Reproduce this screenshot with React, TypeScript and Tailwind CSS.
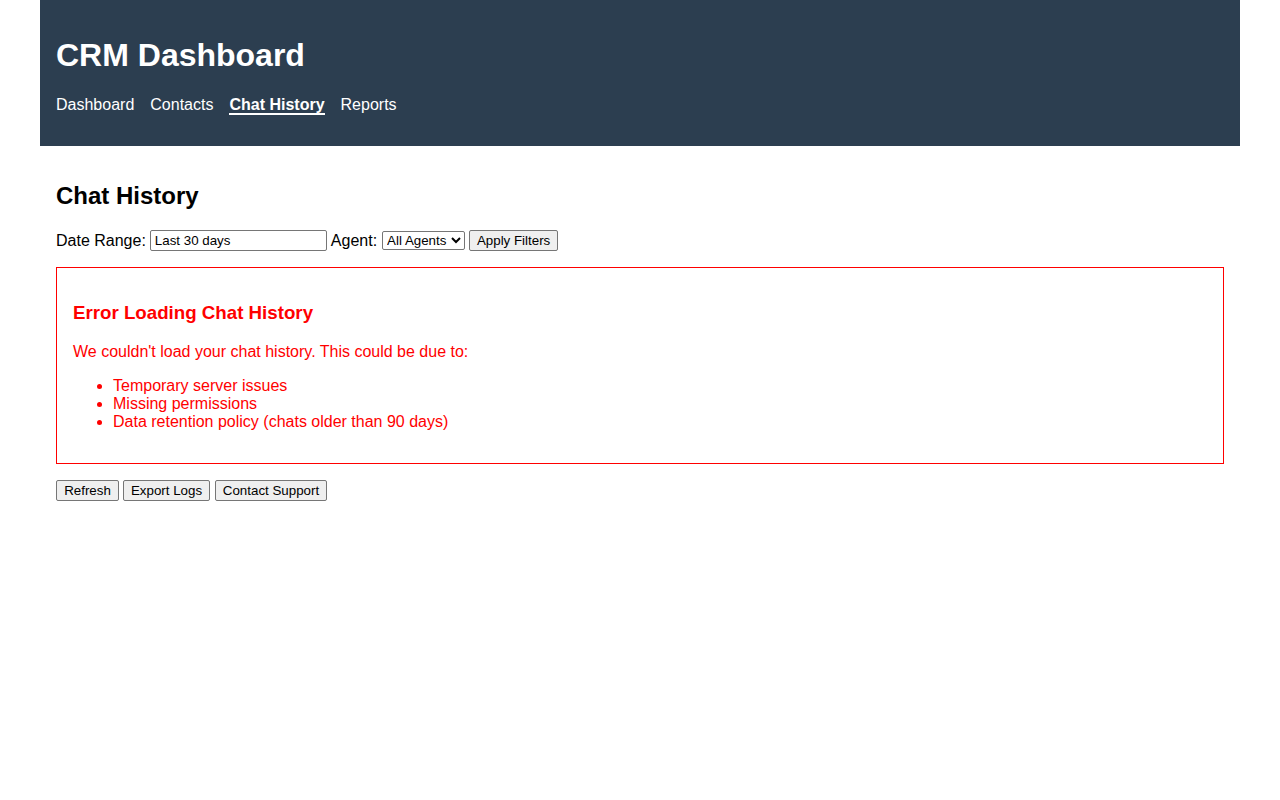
export default function App() {
  const navItems = ['Dashboard', 'Contacts', 'Chat History', 'Reports'];
  const ctrl =
    "border border-[#767676] rounded-[2px] text-[13.33px] leading-[15px] text-black font-['Liberation_Sans',Arial,sans-serif]";
  const btn = `${ctrl} bg-[#efefef] px-[6px] py-[2px] align-middle`;

  return (
    <div className="min-h-screen bg-white font-['Liberation_Sans',Arial,sans-serif] text-base text-black">
      <div className="mx-auto w-[1200px]">
        <header className="bg-[#2c3e50] px-4 pt-[37px] pb-[32px] text-white">
          <h1 className="text-[32px] leading-[37px] font-bold">CRM Dashboard</h1>
          <nav className="mt-[22px] flex h-[18px] items-start gap-4 leading-[18px]">
            {navItems.map((item) => (
              <a
                key={item}
                href="#"
                className={
                  item === 'Chat History'
                    ? 'border-b-2 border-white leading-[17px] font-bold'
                    : 'leading-[18px]'
                }
              >
                {item}
              </a>
            ))}
          </nav>
        </header>

        <main className="px-4 pt-[36px]">
          <h2 className="text-2xl leading-[28px] font-bold">Chat History</h2>
          <div className="mt-[20px] flex h-[21px] items-center leading-[18px]">
            <span>Date Range:</span>
            <input
              defaultValue="Last 30 days"
              className={`${ctrl} ml-[4px] h-[21px] w-[177px] px-[4px]`}
            />
            <span className="ml-[4px]">Agent:</span>
            <select className={`${ctrl} ml-[5px] h-[19px] w-[83px] bg-white`}>
              <option>All Agents</option>
            </select>
            <button className={`${btn} ml-[4px] h-[21px] w-[89px] px-0`}>Apply Filters</button>
          </div>

          <div className="mt-4 border border-[#ff0000] px-4 pt-[34px] pb-[32px] text-[#ff0000]">
            <h3 className="text-[18.72px] leading-[21px] font-bold">Error Loading Chat History</h3>
            <p className="mt-[20px] leading-[18px]">
              We couldn't load your chat history. This could be due to:
            </p>
            <ul className="mt-4 list-disc pl-10 leading-[18px]">
              <li>Temporary server issues</li>
              <li>Missing permissions</li>
              <li>Data retention policy (chats older than 90 days)</li>
            </ul>
          </div>

          <div className="mt-4 flex h-[21px] items-center gap-[4px]">
            <button className={`${btn} h-[21px] w-[63px] px-0`}>Refresh</button>
            <button className={`${btn} h-[21px] w-[87px] px-0`}>Export Logs</button>
            <button className={`${btn} ml-[1px] h-[21px] w-[112px] px-0`}>Contact Support</button>
          </div>
        </main>
      </div>
    </div>
  );
}
